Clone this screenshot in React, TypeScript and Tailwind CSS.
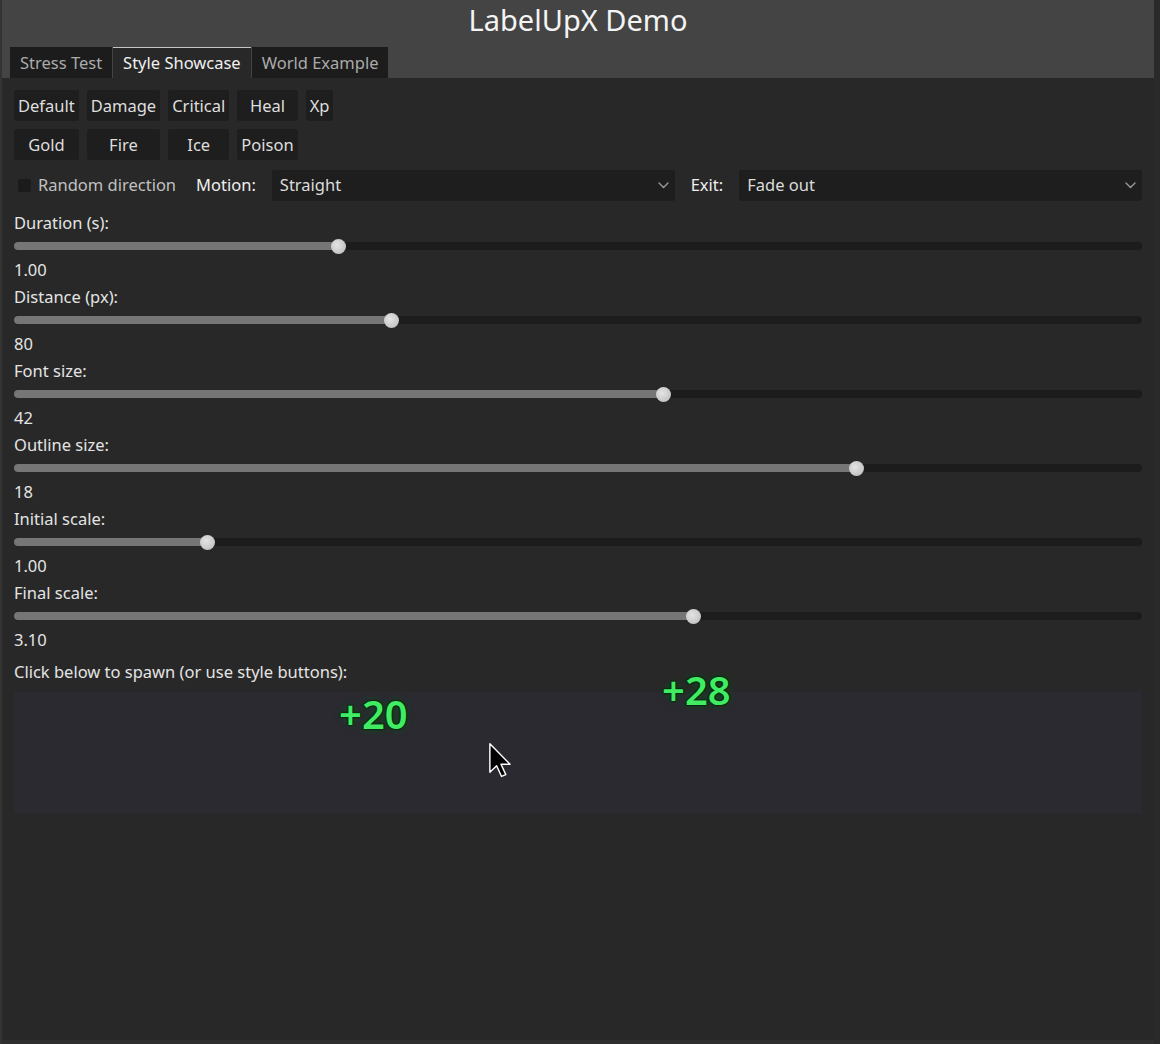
import React from "react";

const styleButtons = ["Default", "Damage", "Critical", "Heal", "Xp", "Gold", "Fire", "Ice", "Poison"];

const sliders = [
  { label: "Duration (s):", value: "1.00", pct: 28.81 },
  { label: "Distance (px):", value: "80", pct: 33.51 },
  { label: "Font size:", value: "42", pct: 57.54 },
  { label: "Outline size:", value: "18", pct: 74.65 },
  { label: "Initial scale:", value: "1.00", pct: 17.11 },
  { label: "Final scale:", value: "3.10", pct: 60.2 },
];

function Chevron() {
  return (
    <svg width="11" height="7" viewBox="0 0 11 7" fill="none">
      <polyline points="1,1 5.5,5.5 10,1" stroke="#9a9a9a" strokeWidth="1.4" strokeLinecap="round" strokeLinejoin="round" />
    </svg>
  );
}

function Select({ value }: { value: string }) {
  return (
    <div className="flex h-full flex-1 items-center justify-between rounded-[3px] bg-[#1e1e1e] pl-2 pr-[6px] text-[#dcdcdc]">
      <span>{value}</span>
      <Chevron />
    </div>
  );
}

function Slider({ pct }: { pct: number }) {
  return (
    <div className="relative flex h-4 items-center">
      <div className="h-2 w-full rounded-full bg-[#1c1c1c]" />
      <div className="absolute left-0 h-2 rounded-full bg-[#767676]" style={{ width: `${pct}%` }} />
      <div
        className="absolute size-[15px] rounded-full bg-[radial-gradient(circle_at_40%_40%,#e4e4e4,#b8b8b8)]"
        style={{ left: `calc(${pct}% - 7.5px)` }}
      />
    </div>
  );
}

function Cursor() {
  return (
    <svg width="23" height="35" viewBox="-0.6 -0.6 17.6 27" className="absolute left-[475px] top-[83px]">
      <path d="M0 0 L0 22 L5.2 17 L9 25.2 L12.3 23.8 L8.6 15.8 L15.6 15.8 Z" fill="#000" stroke="#fff" strokeWidth="1.1" strokeLinejoin="round" />
    </svg>
  );
}

const floatText =
  "absolute text-[40px] leading-none font-semibold text-[#40ec62] [text-shadow:0_0_1px_#021a08,0_0_2px_#021a08,0_0_3px_#03250b,0_0_7px_#0b5a1a]";

export default function App() {
  return (
    <div className="flex h-[1044px] w-[1160px] overflow-hidden bg-[#2a2a2a] font-['Noto_Sans',sans-serif] text-[16.5px] text-[#e4e4e4]">
      <div className="flex w-[1154px] flex-col border-l-2 border-[#333333]">
        {/* header */}
        <div className="bg-[#444444]">
          <div className="h-[47px] pt-px text-center text-[29px] leading-[38px] text-[#f4f4f4]">LabelUpX Demo</div>
          <div className="flex h-[31px] gap-px pl-2">
            <div className="bg-[#1c1c1c] px-2.5 leading-[31px] text-[#ababab]">Stress Test</div>
            <div className="border-t border-[#c4c4c4] bg-[#282828] px-2.5 leading-[30px] text-[#f0f0f0]">Style Showcase</div>
            <div className="bg-[#1c1c1c] px-2.5 leading-[31px] text-[#ababab]">World Example</div>
          </div>
        </div>

        {/* panel */}
        <div className="flex flex-1 flex-col border-b-4 border-[#2e2e2e] bg-[#282828] px-3 pt-3">
          <div className="grid w-fit grid-cols-[repeat(5,auto)] gap-x-2 gap-y-2">
            {styleButtons.map((b) => (
              <div key={b} className="h-[31px] rounded-[3px] bg-[#1e1e1e] px-1 text-center leading-[31px] text-[#dedede]">
                {b}
              </div>
            ))}
          </div>

          <div className="mt-[10px] flex h-[31px] items-center gap-4">
            <div className="flex items-center gap-[7px] px-1">
              <div className="size-[13px] rounded-[2px] bg-[#1b1b1b]" />
              <span className="text-[#c0c0c0]">Random direction</span>
            </div>
            <span className="text-[#efefef]">Motion:</span>
            <Select value="Straight" />
            <span className="text-[#efefef]">Exit:</span>
            <Select value="Fade out" />
          </div>

          <div className="mt-[10px] flex flex-col gap-1">
            {sliders.map((s) => (
              <React.Fragment key={s.label}>
                <div className="h-[23px] leading-[23px]">{s.label}</div>
                <Slider pct={s.pct} />
                <div className="h-[23px] leading-[23px]">{s.value}</div>
              </React.Fragment>
            ))}
          </div>

          {/* spawn area */}
          <div className="relative mt-[9px]">
            <div className="h-[23px] leading-[23px]">Click below to spawn (or use style buttons):</div>
            <div className="mt-[9px] h-[121px] bg-[#2a2a30]" />
            <span className={`${floatText} left-[325px] top-[34px]`}>+20</span>
            <span className={`${floatText} left-[648px] top-[10px]`}>+28</span>
            <Cursor />
          </div>
        </div>
      </div>
    </div>
  );
}
